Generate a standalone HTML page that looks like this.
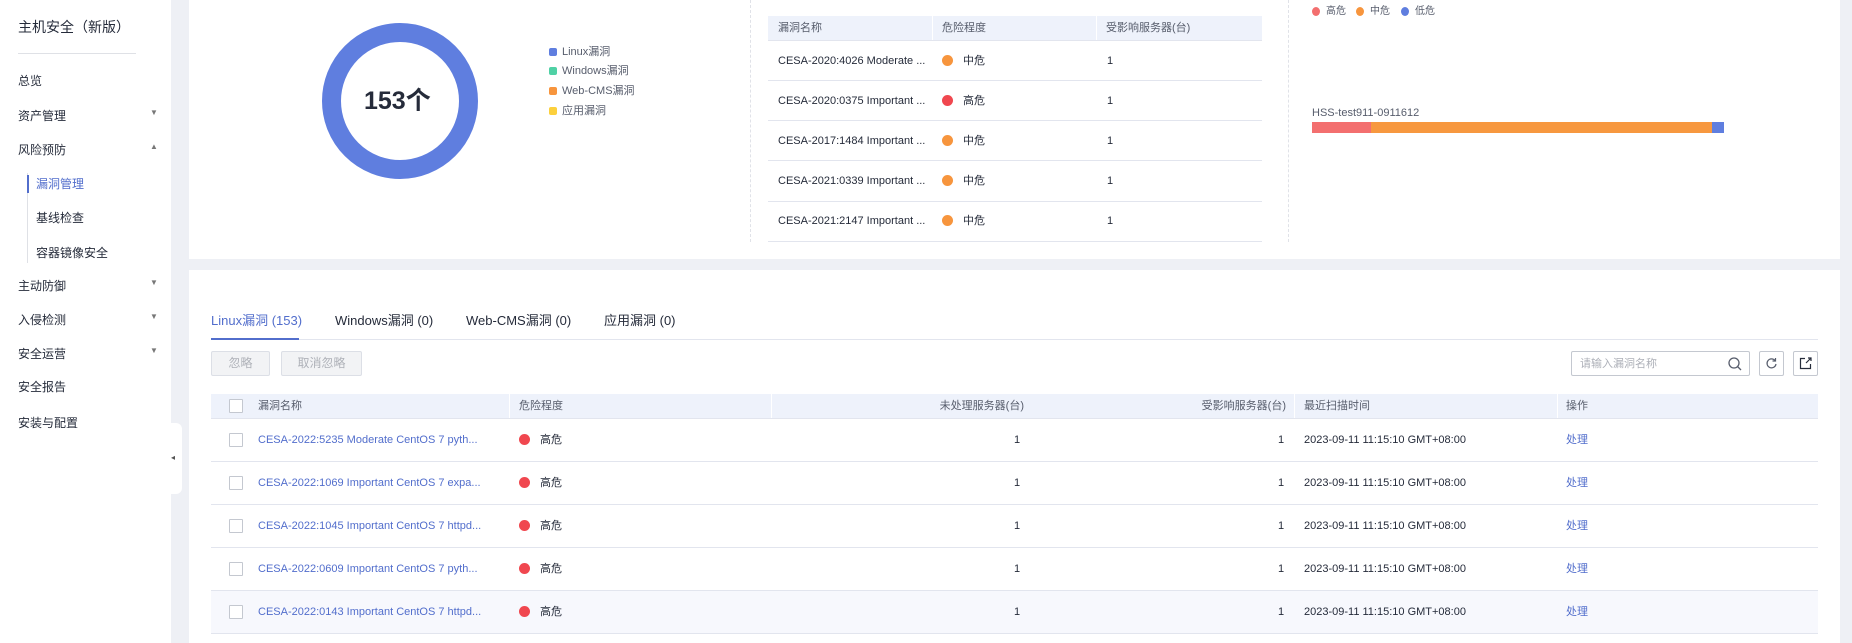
<!DOCTYPE html>
<html><head><meta charset="utf-8"><style>
*{margin:0;padding:0;box-sizing:border-box}
body{width:1852px;height:643px;overflow:hidden;background:#eef0f5;font-family:"Liberation Sans","Noto Sans CJK SC",sans-serif;color:#252b3a;font-size:12px;position:relative}
.a{position:absolute;white-space:nowrap;line-height:14px}
.side{position:absolute;left:0;top:0;width:171px;height:643px;background:#fff}
.card{position:absolute;background:#fff}
.dot{position:absolute;width:11px;height:11px;border-radius:50%}
.hl{position:absolute;height:1px;background:#e2e5ee}
.cb{position:absolute;width:14px;height:14px;border:1px solid #c4c8d0;background:#fff;border-radius:1px}
.lnk{color:#526ecc}
</style></head><body>
<div class="side">
<div class="a" style="left:18px;top:19px;font-size:14px;line-height:16px;color:#252b3a">主机安全（新版）</div>
<div style="position:absolute;left:18px;top:53px;width:118px;height:1px;background:#dfe1e6"></div>
<div class="a" style="left:18px;top:74px">总览</div>
<div class="a" style="left:18px;top:109px">资产管理</div><div class="a" style="left:150px;top:106px;font-size:8px;color:#777">▼</div>
<div class="a" style="left:18px;top:143px">风险预防</div><div class="a" style="left:150px;top:140px;font-size:8px;color:#777">▲</div>
<div style="position:absolute;left:27px;top:173px;width:1px;height:90px;background:#dfe1e6"></div>
<div style="position:absolute;left:27px;top:175px;width:2px;height:18px;background:#526ecc"></div>
<div class="a" style="left:36px;top:177px;color:#526ecc">漏洞管理</div>
<div class="a" style="left:36px;top:211px">基线检查</div>
<div class="a" style="left:36px;top:246px">容器镜像安全</div>
<div class="a" style="left:18px;top:279px">主动防御</div><div class="a" style="left:150px;top:276px;font-size:8px;color:#777">▼</div>
<div class="a" style="left:18px;top:313px">入侵检测</div><div class="a" style="left:150px;top:310px;font-size:8px;color:#777">▼</div>
<div class="a" style="left:18px;top:347px">安全运营</div><div class="a" style="left:150px;top:344px;font-size:8px;color:#777">▼</div>
<div class="a" style="left:18px;top:380px">安全报告</div>
<div class="a" style="left:18px;top:416px">安装与配置</div>
</div>
<div style="position:absolute;left:168px;top:423px;width:14px;height:71px;background:#fff;border-radius:0 6px 6px 0"></div>
<div class="a" style="left:171px;top:451px;font-size:8px;color:#555">◂</div>

<div class="card" style="left:189px;top:0;width:1651px;height:259px"></div>
<div style="position:absolute;left:322px;top:23px;width:156px;height:156px;border-radius:50%;border:19px solid #5f7edf"></div>
<div class="a" style="left:364px;top:87px;font-size:25px;line-height:28px;font-weight:bold;color:#252b3a">153个</div>
<div style="position:absolute;left:549px;top:48px;width:8px;height:8px;border-radius:2px;background:#5f7edf"></div><div class="a" style="left:562px;top:45px;font-size:11px;color:#575d6c">Linux漏洞</div>
<div style="position:absolute;left:549px;top:67px;width:8px;height:8px;border-radius:2px;background:#4fd1a5"></div><div class="a" style="left:562px;top:64px;font-size:11px;color:#575d6c">Windows漏洞</div>
<div style="position:absolute;left:549px;top:87px;width:8px;height:8px;border-radius:2px;background:#f7953d"></div><div class="a" style="left:562px;top:84px;font-size:11px;color:#575d6c">Web-CMS漏洞</div>
<div style="position:absolute;left:549px;top:107px;width:8px;height:8px;border-radius:2px;background:#fcd03d"></div><div class="a" style="left:562px;top:104px;font-size:11px;color:#575d6c">应用漏洞</div>
<div style="position:absolute;left:750px;top:0;height:242px;border-left:1px dashed #e0e2e8"></div>
<div style="position:absolute;left:1288px;top:0;height:242px;border-left:1px dashed #e0e2e8"></div>
<div style="position:absolute;left:768px;top:16px;width:494px;height:24px;background:#eef2fb"></div>
<div style="position:absolute;left:932px;top:16px;width:1px;height:24px;background:#fff"></div>
<div style="position:absolute;left:1096px;top:16px;width:1px;height:24px;background:#fff"></div>
<div class="a" style="left:778px;top:21px;font-size:11px;color:#575d6c">漏洞名称</div>
<div class="a" style="left:942px;top:21px;font-size:11px;color:#575d6c">危险程度</div>
<div class="a" style="left:1106px;top:21px;font-size:11px;color:#575d6c">受影响服务器(台)</div>
<div class="hl" style="left:768px;top:40px;width:494px"></div>
<div class="hl" style="left:768px;top:80px;width:494px"></div>
<div class="hl" style="left:768px;top:120px;width:494px"></div>
<div class="hl" style="left:768px;top:160px;width:494px"></div>
<div class="hl" style="left:768px;top:201px;width:494px"></div>
<div class="hl" style="left:768px;top:241px;width:494px"></div>
<div class="a" style="left:778px;top:54px;font-size:11px">CESA-2020:4026 Moderate ...</div><div class="dot" style="left:942px;top:55px;background:#f7953d"></div><div class="a" style="left:963px;top:54px;font-size:11px">中危</div><div class="a" style="left:1107px;top:54px;font-size:11px">1</div>
<div class="a" style="left:778px;top:94px;font-size:11px">CESA-2020:0375 Important ...</div><div class="dot" style="left:942px;top:95px;background:#f0474f"></div><div class="a" style="left:963px;top:94px;font-size:11px">高危</div><div class="a" style="left:1107px;top:94px;font-size:11px">1</div>
<div class="a" style="left:778px;top:134px;font-size:11px">CESA-2017:1484 Important ...</div><div class="dot" style="left:942px;top:135px;background:#f7953d"></div><div class="a" style="left:963px;top:134px;font-size:11px">中危</div><div class="a" style="left:1107px;top:134px;font-size:11px">1</div>
<div class="a" style="left:778px;top:174px;font-size:11px">CESA-2021:0339 Important ...</div><div class="dot" style="left:942px;top:175px;background:#f7953d"></div><div class="a" style="left:963px;top:174px;font-size:11px">中危</div><div class="a" style="left:1107px;top:174px;font-size:11px">1</div>
<div class="a" style="left:778px;top:214px;font-size:11px">CESA-2021:2147 Important ...</div><div class="dot" style="left:942px;top:215px;background:#f7953d"></div><div class="a" style="left:963px;top:214px;font-size:11px">中危</div><div class="a" style="left:1107px;top:214px;font-size:11px">1</div>
<div class="dot" style="left:1312px;top:7px;width:8px;height:9px;background:#f36f6f"></div><div class="a" style="left:1326px;top:5px;font-size:10px;color:#575d6c">高危</div>
<div class="dot" style="left:1356px;top:7px;width:8px;height:9px;background:#f7953d"></div><div class="a" style="left:1370px;top:5px;font-size:10px;color:#575d6c">中危</div>
<div class="dot" style="left:1401px;top:7px;width:8px;height:9px;background:#5f7edf"></div><div class="a" style="left:1415px;top:5px;font-size:10px;color:#575d6c">低危</div>
<div class="a" style="left:1312px;top:106px;font-size:11px;color:#575d6c">HSS-test911-0911612</div>
<div style="position:absolute;left:1312px;top:122px;width:59px;height:11px;background:#f36f6f"></div>
<div style="position:absolute;left:1371px;top:122px;width:341px;height:11px;background:#f7983f"></div>
<div style="position:absolute;left:1712px;top:122px;width:12px;height:11px;background:#5f7edf"></div>

<div class="card" style="left:189px;top:270px;width:1651px;height:373px"></div>
<div class="a" style="left:211px;top:313px;font-size:13px;line-height:16px;color:#526ecc">Linux漏洞 (153)</div>
<div class="a" style="left:335px;top:313px;font-size:13px;line-height:16px;color:#252b3a">Windows漏洞 (0)</div>
<div class="a" style="left:466px;top:313px;font-size:13px;line-height:16px;color:#252b3a">Web-CMS漏洞 (0)</div>
<div class="a" style="left:604px;top:313px;font-size:13px;line-height:16px;color:#252b3a">应用漏洞 (0)</div>
<div class="hl" style="left:211px;top:339px;width:1607px"></div>
<div style="position:absolute;left:211px;top:338px;width:88px;height:2px;background:#526ecc"></div>
<div style="position:absolute;left:211px;top:351px;width:59px;height:25px;background:#f2f3f5;border:1px solid #dcdfe6;border-radius:2px;color:#aeb1b8;text-align:center;line-height:23px">忽略</div>
<div style="position:absolute;left:281px;top:351px;width:81px;height:25px;background:#f2f3f5;border:1px solid #dcdfe6;border-radius:2px;color:#aeb1b8;text-align:center;line-height:23px">取消忽略</div>
<div style="position:absolute;left:1571px;top:351px;width:179px;height:25px;border:1px solid #c4c8d0;border-radius:2px"></div>
<div class="a" style="left:1580px;top:357px;font-size:11px;color:#adb0b8">请输入漏洞名称</div>
<svg class="a" style="left:1727px;top:356px" width="16" height="16" viewBox="0 0 16 16"><circle cx="7" cy="7" r="5" fill="none" stroke="#575d6c" stroke-width="1.3"/><path d="M10.5 10.5L14 14" stroke="#575d6c" stroke-width="1.3"/></svg>
<div style="position:absolute;left:1759px;top:351px;width:25px;height:25px;border:1px solid #c4c8d0;border-radius:2px"></div>
<svg class="a" style="left:1765px;top:357px" width="13" height="13" viewBox="0 0 13 13"><path d="M10 3.5A4.5 4.5 0 1 0 11 7" fill="none" stroke="#575d6c" stroke-width="1.2"/><path d="M10.5 1v3h-3" fill="none" stroke="#575d6c" stroke-width="1.2"/></svg>
<div style="position:absolute;left:1793px;top:351px;width:25px;height:25px;border:1px solid #c4c8d0;border-radius:2px"></div>
<svg class="a" style="left:1799px;top:357px" width="13" height="13" viewBox="0 0 13 13"><path d="M6 1.5H1.5v10h10V7" fill="none" stroke="#252b3a" stroke-width="1.2"/><path d="M7 6l5-5M9 1h3v3" fill="none" stroke="#252b3a" stroke-width="1.2"/></svg>

<div style="position:absolute;left:211px;top:394px;width:1607px;height:24px;background:#eef2fb"></div>
<div style="position:absolute;left:509px;top:394px;width:1px;height:24px;background:#fff"></div>
<div style="position:absolute;left:771px;top:394px;width:1px;height:24px;background:#fff"></div>
<div style="position:absolute;left:1294px;top:394px;width:1px;height:24px;background:#fff"></div>
<div style="position:absolute;left:1557px;top:394px;width:1px;height:24px;background:#fff"></div>
<div class="cb" style="left:229px;top:399px"></div>
<div class="a" style="left:258px;top:399px;font-size:11px;color:#575d6c">漏洞名称</div>
<div class="a" style="left:519px;top:399px;font-size:11px;color:#575d6c">危险程度</div>
<div class="a" style="left:934px;top:399px;font-size:11px;color:#575d6c;width:90px;text-align:right">未处理服务器(台)</div>
<div class="a" style="left:1196px;top:399px;font-size:11px;color:#575d6c;width:90px;text-align:right">受影响服务器(台)</div>
<div class="a" style="left:1304px;top:399px;font-size:11px;color:#575d6c">最近扫描时间</div>
<div class="a" style="left:1566px;top:399px;font-size:11px;color:#575d6c">操作</div>
<div class="hl" style="left:211px;top:418px;width:1607px"></div>
<div style="position:absolute;left:211px;top:591px;width:1607px;height:42px;background:#f7f8fd"></div>
<div class="hl" style="left:211px;top:461px;width:1607px"></div>
<div class="hl" style="left:211px;top:504px;width:1607px"></div>
<div class="hl" style="left:211px;top:547px;width:1607px"></div>
<div class="hl" style="left:211px;top:590px;width:1607px"></div>
<div class="hl" style="left:211px;top:633px;width:1607px"></div>

<div class="cb" style="left:229px;top:433px"></div><div class="a lnk" style="left:258px;top:433px;font-size:11px">CESA-2022:5235 Moderate CentOS 7 pyth...</div><div class="dot" style="left:519px;top:434px;background:#f0474f"></div><div class="a" style="left:540px;top:433px;font-size:11px">高危</div><div class="a" style="left:1014px;top:433px;font-size:11px">1</div><div class="a" style="left:1278px;top:433px;font-size:11px">1</div><div class="a" style="left:1304px;top:433px;font-size:11px">2023-09-11 11:15:10 GMT+08:00</div><div class="a lnk" style="left:1566px;top:433px;font-size:11px">处理</div>
<div class="cb" style="left:229px;top:476px"></div><div class="a lnk" style="left:258px;top:476px;font-size:11px">CESA-2022:1069 Important CentOS 7 expa...</div><div class="dot" style="left:519px;top:477px;background:#f0474f"></div><div class="a" style="left:540px;top:476px;font-size:11px">高危</div><div class="a" style="left:1014px;top:476px;font-size:11px">1</div><div class="a" style="left:1278px;top:476px;font-size:11px">1</div><div class="a" style="left:1304px;top:476px;font-size:11px">2023-09-11 11:15:10 GMT+08:00</div><div class="a lnk" style="left:1566px;top:476px;font-size:11px">处理</div>
<div class="cb" style="left:229px;top:519px"></div><div class="a lnk" style="left:258px;top:519px;font-size:11px">CESA-2022:1045 Important CentOS 7 httpd...</div><div class="dot" style="left:519px;top:520px;background:#f0474f"></div><div class="a" style="left:540px;top:519px;font-size:11px">高危</div><div class="a" style="left:1014px;top:519px;font-size:11px">1</div><div class="a" style="left:1278px;top:519px;font-size:11px">1</div><div class="a" style="left:1304px;top:519px;font-size:11px">2023-09-11 11:15:10 GMT+08:00</div><div class="a lnk" style="left:1566px;top:519px;font-size:11px">处理</div>
<div class="cb" style="left:229px;top:562px"></div><div class="a lnk" style="left:258px;top:562px;font-size:11px">CESA-2022:0609 Important CentOS 7 pyth...</div><div class="dot" style="left:519px;top:563px;background:#f0474f"></div><div class="a" style="left:540px;top:562px;font-size:11px">高危</div><div class="a" style="left:1014px;top:562px;font-size:11px">1</div><div class="a" style="left:1278px;top:562px;font-size:11px">1</div><div class="a" style="left:1304px;top:562px;font-size:11px">2023-09-11 11:15:10 GMT+08:00</div><div class="a lnk" style="left:1566px;top:562px;font-size:11px">处理</div>
<div class="cb" style="left:229px;top:605px"></div><div class="a lnk" style="left:258px;top:605px;font-size:11px">CESA-2022:0143 Important CentOS 7 httpd...</div><div class="dot" style="left:519px;top:606px;background:#f0474f"></div><div class="a" style="left:540px;top:605px;font-size:11px">高危</div><div class="a" style="left:1014px;top:605px;font-size:11px">1</div><div class="a" style="left:1278px;top:605px;font-size:11px">1</div><div class="a" style="left:1304px;top:605px;font-size:11px">2023-09-11 11:15:10 GMT+08:00</div><div class="a lnk" style="left:1566px;top:605px;font-size:11px">处理</div>
</body></html>
